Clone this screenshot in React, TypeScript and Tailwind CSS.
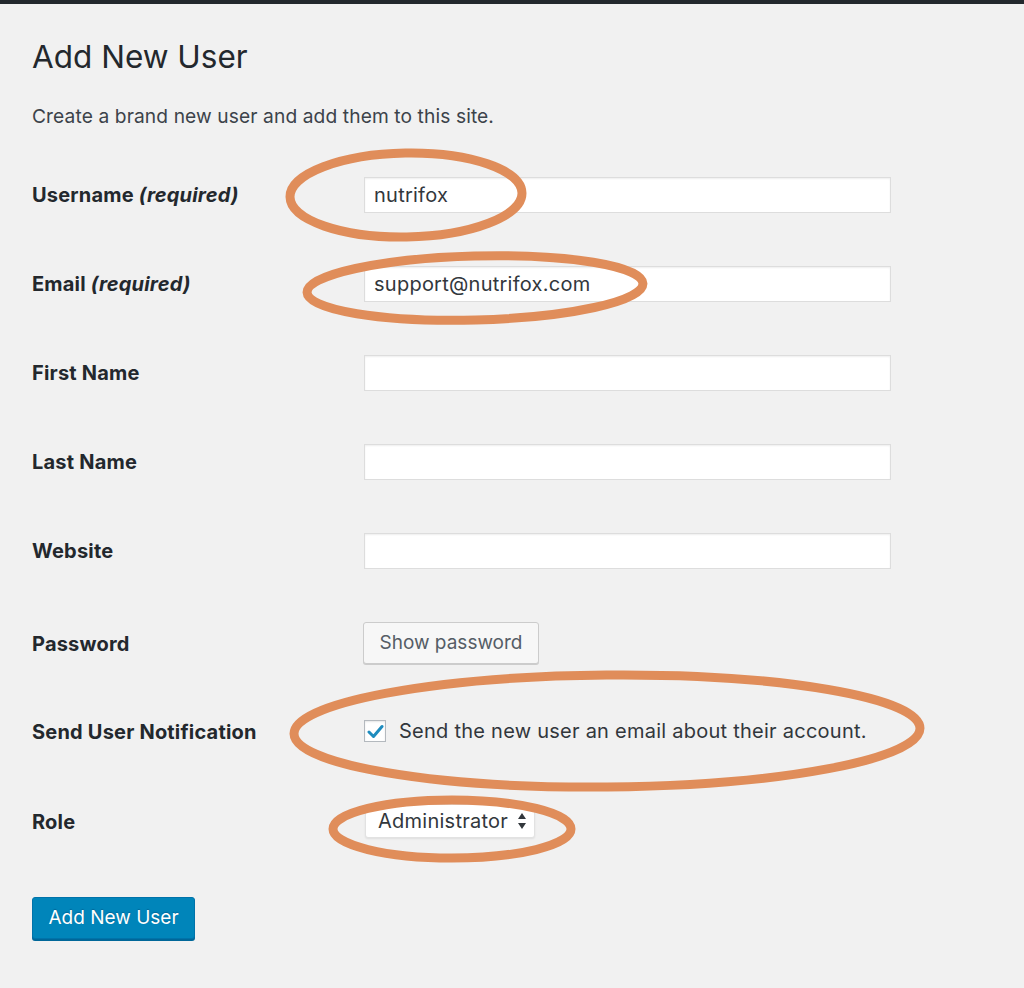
import React from "react";

const font = { fontFamily: "Inter, 'Liberation Sans', Arial, sans-serif" };

function TextField({ value = "" }: { value?: string }) {
  return (
    <div className="h-[36px] w-[527px] border border-[#dddddd] bg-white shadow-[inset_0_1px_2px_rgba(0,0,0,0.07)] flex items-center px-[9px] text-[20px] tracking-[0.25px] text-[#32373c]">
      {value}
    </div>
  );
}

function Row({
  label,
  required,
  h,
  children,
}: {
  label: string;
  required?: boolean;
  h: string;
  children?: React.ReactNode;
}) {
  return (
    <div className={`flex items-center ${h}`}>
      <div className="w-[332px] shrink-0 pt-[1px] text-[20px] tracking-[0.2px] font-bold text-[#23282d]">
        {label}
        {required && <em className="font-bold"> (required)</em>}
      </div>
      <div className="flex items-center">{children}</div>
    </div>
  );
}

function Marks() {
  // hand-drawn highlight rings over the form
  return (
    <svg
      className="absolute left-0 top-0 pointer-events-none"
      width="1024"
      height="988"
      viewBox="0 0 1024 988"
      fill="none"
      stroke="#e08d5a"
      strokeWidth="9"
    >
      <ellipse cx="406" cy="195" rx="116" ry="42" transform="rotate(-1 406 195)" />
      <ellipse cx="475" cy="288" rx="168" ry="32" transform="rotate(-1.5 475 288)" />
      <ellipse cx="607" cy="731" rx="313" ry="56" transform="rotate(-0.5 607 731)" />
      <ellipse cx="452" cy="829" rx="119" ry="29" />
    </svg>
  );
}

export default function App() {
  return (
    <div className="relative w-[1024px] h-[988px] bg-[#f1f1f1] overflow-hidden" style={font}>
      <div className="h-[4px] bg-[#23282d]" />
      <div className="pl-[32px]">
        <h1 className="mt-[33px] text-[31.5px] leading-[40px] text-[#23282d] font-normal">Add New User</h1>
        <p className="mt-[27px] text-[19.2px] leading-[24px] tracking-[0.1px] text-[#3c434a]">
          Create a brand new user and add them to this site.
        </p>
        <div className="mt-[22px]">
          <Row label="Username" required h="h-[89px]">
            <TextField value="nutrifox" />
          </Row>
          <Row label="Email" required h="h-[89px]">
            <TextField value="support@nutrifox.com" />
          </Row>
          <Row label="First Name" h="h-[89px]">
            <TextField />
          </Row>
          <Row label="Last Name" h="h-[89px]">
            <TextField />
          </Row>
          <Row label="Website" h="h-[89px]">
            <TextField />
          </Row>
          <Row label="Password" h="h-[96px]">
            <button className="-ml-[1px] h-[42px] w-[176px] rounded-[3px] border border-[#cccccc] bg-[#f7f7f7] shadow-[0_1px_0_#cccccc] text-[19px] text-[#555d66]">
              Show password
            </button>
          </Row>
          <Row label="Send User Notification" h="h-[80px]">
            <span className="w-[22px] h-[22px] border border-[#b4b9be] bg-white flex items-center justify-center shadow-[inset_0_1px_2px_rgba(0,0,0,0.1)]">
              <svg width="17" height="15" viewBox="0 0 17 15">
                <path d="M2 8 L6.5 12.5 L15 2.5" stroke="#1e8cbe" strokeWidth="3" fill="none" strokeLinecap="round" strokeLinejoin="round" />
              </svg>
            </span>
            <span className="ml-[13px] text-[20px] tracking-[0.25px] text-[#32373c]">
              Send the new user an email about their account.
            </span>
          </Row>
          <Row label="Role" h="h-[100px]">
            <div className="ml-[1px] h-[34px] w-[170px] pl-[12px] pr-[7px] rounded-[3px] bg-white border border-[#e2e2e2] shadow-[0_1px_2px_rgba(0,0,0,0.08)] flex items-center justify-between text-[20px] tracking-[0.25px] text-[#32373c]">
              Administrator
              <svg width="10" height="18" viewBox="0 0 10 18">
                <path d="M5 1 L9 7 L1 7 Z M1 11 L9 11 L5 17 Z" fill="#32373c" />
              </svg>
            </div>
          </Row>
        </div>
        <button className="mt-[26px] h-[42px] w-[163px] rounded-[3px] bg-[#0085ba] border border-[#0073aa] shadow-[0_2px_0_#006799] text-[19px] text-white [text-shadow:0_-1px_1px_#006799]">
          Add New User
        </button>
      </div>
      <Marks />
    </div>
  );
}
